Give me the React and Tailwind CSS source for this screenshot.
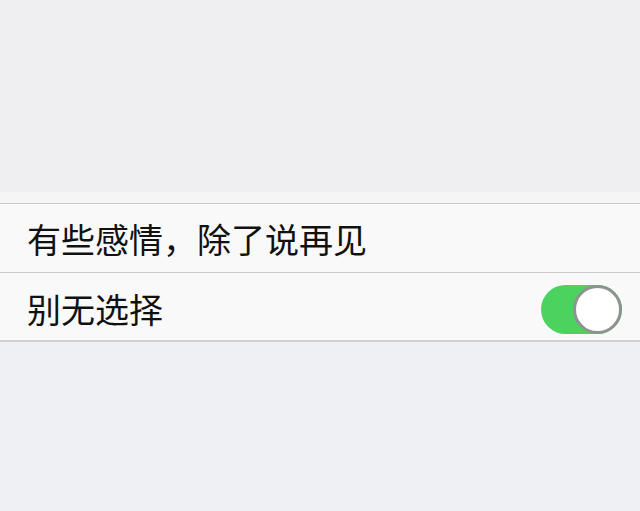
export default function App() {
  return (
    <div
      className="w-[640px] h-[511px] flex flex-col bg-[#eef0f4] overflow-hidden"
      style={{ fontFamily: '"Noto Sans CJK SC", "Noto Sans", sans-serif' }}
    >
      <div className="h-[192px] bg-[#efeff1]" />
      <div className="h-[11px] bg-[#f5f5f6]" />
      <div className="border-t border-[#c9c9cc] bg-[#f9f9fa]">
        <div className="h-[69px] flex items-center pl-[27px] border-b border-[#c9c9cc]">
          <span className="text-[34px] leading-none text-[#111] mt-[2px]">有些感情，除了说再见</span>
        </div>
        <div className="h-[67px] flex items-center justify-between pl-[27px] pr-[18px]">
          <span className="text-[34px] leading-none text-[#111] mt-[4px]">别无选择</span>
          <div className="relative w-[81px] h-[49px] rounded-full bg-[#4cd35f] mt-[5px]">
            <div className="absolute right-0 top-0 w-[49px] h-[49px] rounded-full bg-white border-[3px] border-[#8e9291]" />
          </div>
        </div>
      </div>
      <div className="border-t-2 border-[#d0d0d4] flex-1 bg-[#eef0f4]" />
    </div>
  );
}
